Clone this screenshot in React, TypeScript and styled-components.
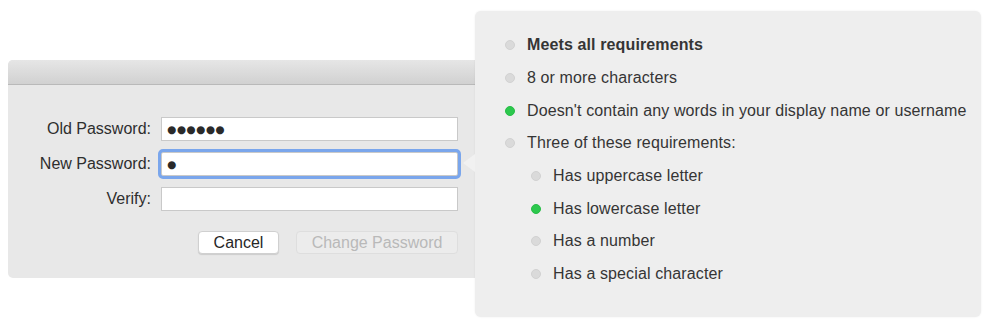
import React from "react";
import styled, { createGlobalStyle } from "styled-components";

const GlobalStyle = createGlobalStyle`
  html, body {
    margin: 0;
    padding: 0;
    background: #fff;
  }
  body {
    font-family: "Liberation Sans", Arial, sans-serif;
    color: #333;
  }
`;

const Stage = styled.div`
  position: relative;
  width: 1007px;
  height: 327px;
  padding: 60px 0 0 8px;
  box-sizing: border-box;
`;

const Dialog = styled.div`
  width: 490px;
  height: 218px;
  background: #e8e8e8;
  border-radius: 5px;
  overflow: hidden;
`;

const TitleBar = styled.div`
  height: 24px;
  background: linear-gradient(#e6e6e6, #d1d1d1);
  border-bottom: 1px solid #b9b9b9;
`;

const FormGrid = styled.div`
  display: grid;
  grid-template-columns: 143px 297px;
  column-gap: 10px;
  row-gap: 11px;
  align-items: center;
  padding-top: 32px;
`;

const Label = styled.label`
  text-align: right;
  font-size: 16px;
  color: #2e2e2e;
`;

const Field = styled.input<{ $focused?: boolean }>`
  box-sizing: border-box;
  height: 24px;
  width: 297px;
  margin: 0;
  padding: 0 5px;
  background: #fff;
  border: 1px solid #c9c9c9;
  border-radius: ${(p) => (p.$focused ? "2px" : "0")};
  font-family: "DejaVu Sans", sans-serif;
  font-size: 10.5px;
  letter-spacing: 0.5px;
  color: #2a2a2a;
  outline: ${(p) => (p.$focused ? "3px solid #7aa6ec" : "none")};
  box-shadow: ${(p) => (p.$focused ? "0 0 0 1px #8fb4ef" : "none")};
`;

const ButtonRow = styled.div`
  display: flex;
  justify-content: flex-end;
  gap: 17px;
  width: 450px;
  margin-top: 20px;
`;

const Button = styled.button<{ $disabled?: boolean }>`
  box-sizing: border-box;
  height: 23px;
  padding: 0;
  width: ${(p) => (p.$disabled ? "162px" : "81px")};
  font-family: "Liberation Sans", Arial, sans-serif;
  font-size: 16px;
  color: ${(p) => (p.$disabled ? "#b9b9b9" : "#262626")};
  background: ${(p) => (p.$disabled ? "#ececec" : "#fff")};
  border: 1px solid ${(p) => (p.$disabled ? "#dedede" : "#d0d0d0")};
  border-radius: 4px;
  box-shadow: ${(p) => (p.$disabled ? "none" : "0 1px 1px rgba(0,0,0,0.12)")};
`;

const Popover = styled.div`
  position: absolute;
  left: 475px;
  top: 11px;
  width: 506px;
  height: 306px;
  box-sizing: border-box;
  padding: 18px 0 0 30px;
  background: #eeeeee;
  border-radius: 6px;
  box-shadow: 0 0 2px rgba(0, 0, 0, 0.08);

  &::before {
    content: "";
    position: absolute;
    left: -12px;
    top: 143px;
    border-top: 9px solid transparent;
    border-bottom: 9px solid transparent;
    border-right: 12px solid #f1f1f1;
  }
`;

const List = styled.ul`
  list-style: none;
  margin: 0;
  padding: 0;
`;

const Item = styled.li<{ $indent?: boolean; $bold?: boolean }>`
  display: flex;
  align-items: center;
  gap: 12px;
  height: 32.7px;
  padding-left: ${(p) => (p.$indent ? "26px" : "0")};
  font-size: 16px;
  letter-spacing: 0.12px;
  font-weight: ${(p) => (p.$bold ? 700 : 400)};
  color: #353535;
`;

const Dot = styled.span<{ $ok?: boolean }>`
  flex: none;
  width: 10px;
  height: 10px;
  box-sizing: border-box;
  border-radius: 50%;
  background: ${(p) => (p.$ok ? "#2cc84d" : "#dadada")};
  border: 1px solid ${(p) => (p.$ok ? "#27bd46" : "#d2d2d2")};
`;

const requirements = [
  { text: "Meets all requirements", ok: false, bold: true },
  { text: "8 or more characters", ok: false },
  { text: "Doesn't contain any words in your display name or username", ok: true },
  { text: "Three of these requirements:", ok: false },
  { text: "Has uppercase letter", ok: false, indent: true },
  { text: "Has lowercase letter", ok: true, indent: true },
  { text: "Has a number", ok: false, indent: true },
  { text: "Has a special character", ok: false, indent: true },
];

const App = () => {
  return (
    <Stage>
      <GlobalStyle />
      <Dialog>
        <TitleBar />
        <FormGrid>
          <Label>Old Password:</Label>
          <Field readOnly value="●●●●●●" />
          <Label>New Password:</Label>
          <Field readOnly value="●" $focused />
          <Label>Verify:</Label>
          <Field readOnly value="" />
        </FormGrid>
        <ButtonRow>
          <Button>Cancel</Button>
          <Button $disabled>Change Password</Button>
        </ButtonRow>
      </Dialog>
      <Popover>
        <List>
          {requirements.map((r) => (
            <Item key={r.text} $indent={r.indent} $bold={r.bold}>
              <Dot $ok={r.ok} />
              {r.text}
            </Item>
          ))}
        </List>
      </Popover>
    </Stage>
  );
};

export default App;
